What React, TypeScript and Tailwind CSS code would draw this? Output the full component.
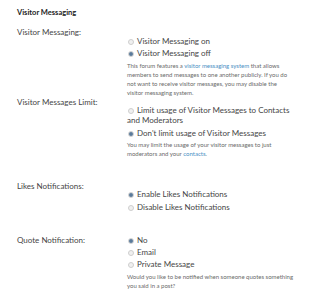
import React from "react";

function Radio({ checked, label, className = "" }: { checked?: boolean; label: React.ReactNode; className?: string }) {
  return (
    <div className={`py-[1px] text-[8px] leading-[10px] text-[#454545] ${className}`}>
      <span className="ml-[1px] mr-[3px] inline-flex h-[6px] w-[6px] items-center justify-center rounded-full border border-[#cfcfcf] bg-[#f0f0f0] align-middle">
        {checked && <span className="h-[4px] w-[4px] rounded-full bg-[#5a7a9a]" />}
      </span>
      {label}
    </div>
  );
}

function Desc({ children, className = "" }: { children: React.ReactNode; className?: string }) {
  return <p className={`text-[6px] leading-[9px] text-[#6a6a6a] ${className}`}>{children}</p>;
}

function Label({ children, className = "" }: { children: React.ReactNode; className?: string }) {
  return <div className={`w-[110px] shrink-0 text-[8px] leading-[10px] text-[#454545] ${className}`}>{children}</div>;
}

export default function App() {
  return (
    <div className="h-[300px] w-[318px] overflow-hidden bg-white font-['Lato',sans-serif]">
      <div className="pl-[17px] pt-[8px]">
        <div className="text-[7.5px] font-bold leading-[10px] text-[#222]">Visitor Messaging</div>

        <div className="mt-[9px] flex">
          <Label>Visitor Messaging:</Label>
          <div className="w-[168px] pt-[8px]">
            <Radio label="Visitor Messaging on" />
            <Radio checked label="Visitor Messaging off" />
            <Desc className="mt-[2px] w-[164px]">
              This forum features a <span className="text-[#4a8fc4]">visitor messaging system</span> that allows members
              to send messages to one another publicly. If you do not want to receive visitor messages, you may disable
              the visitor messaging system.
            </Desc>
          </div>
        </div>

        <div className="flex">
          <Label>Visitor Messages Limit:</Label>
          <div className="w-[168px] pt-[7px]">
            <Radio label="Limit usage of Visitor Messages to Contacts and Moderators" />
            <Radio checked label="Don't limit usage of Visitor Messages" className="mt-[1px]" />
            <Desc className="mt-[1px]">
              You may limit the usage of your visitor messages to just moderators and your{" "}
              <span className="text-[#4a8fc4]">contacts</span>.
            </Desc>
          </div>
        </div>

        <div className="mt-[23px] flex">
          <Label>Likes Notifications:</Label>
          <div className="w-[168px] pt-[7px]">
            <Radio checked label="Enable Likes Notifications" />
            <Radio label="Disable Likes Notifications" className="mt-[1px]" />
          </div>
        </div>

        <div className="mt-[21px] flex">
          <Label className="pt-[1px]">Quote Notification:</Label>
          <div className="w-[168px]">
            <Radio checked label="No" />
            <Radio label="Email" />
            <Radio label="Private Message" />
            <Desc className="mt-[2px]">
              Would you like to be notified when someone quotes something you said in a post?
            </Desc>
          </div>
        </div>
      </div>
    </div>
  );
}
